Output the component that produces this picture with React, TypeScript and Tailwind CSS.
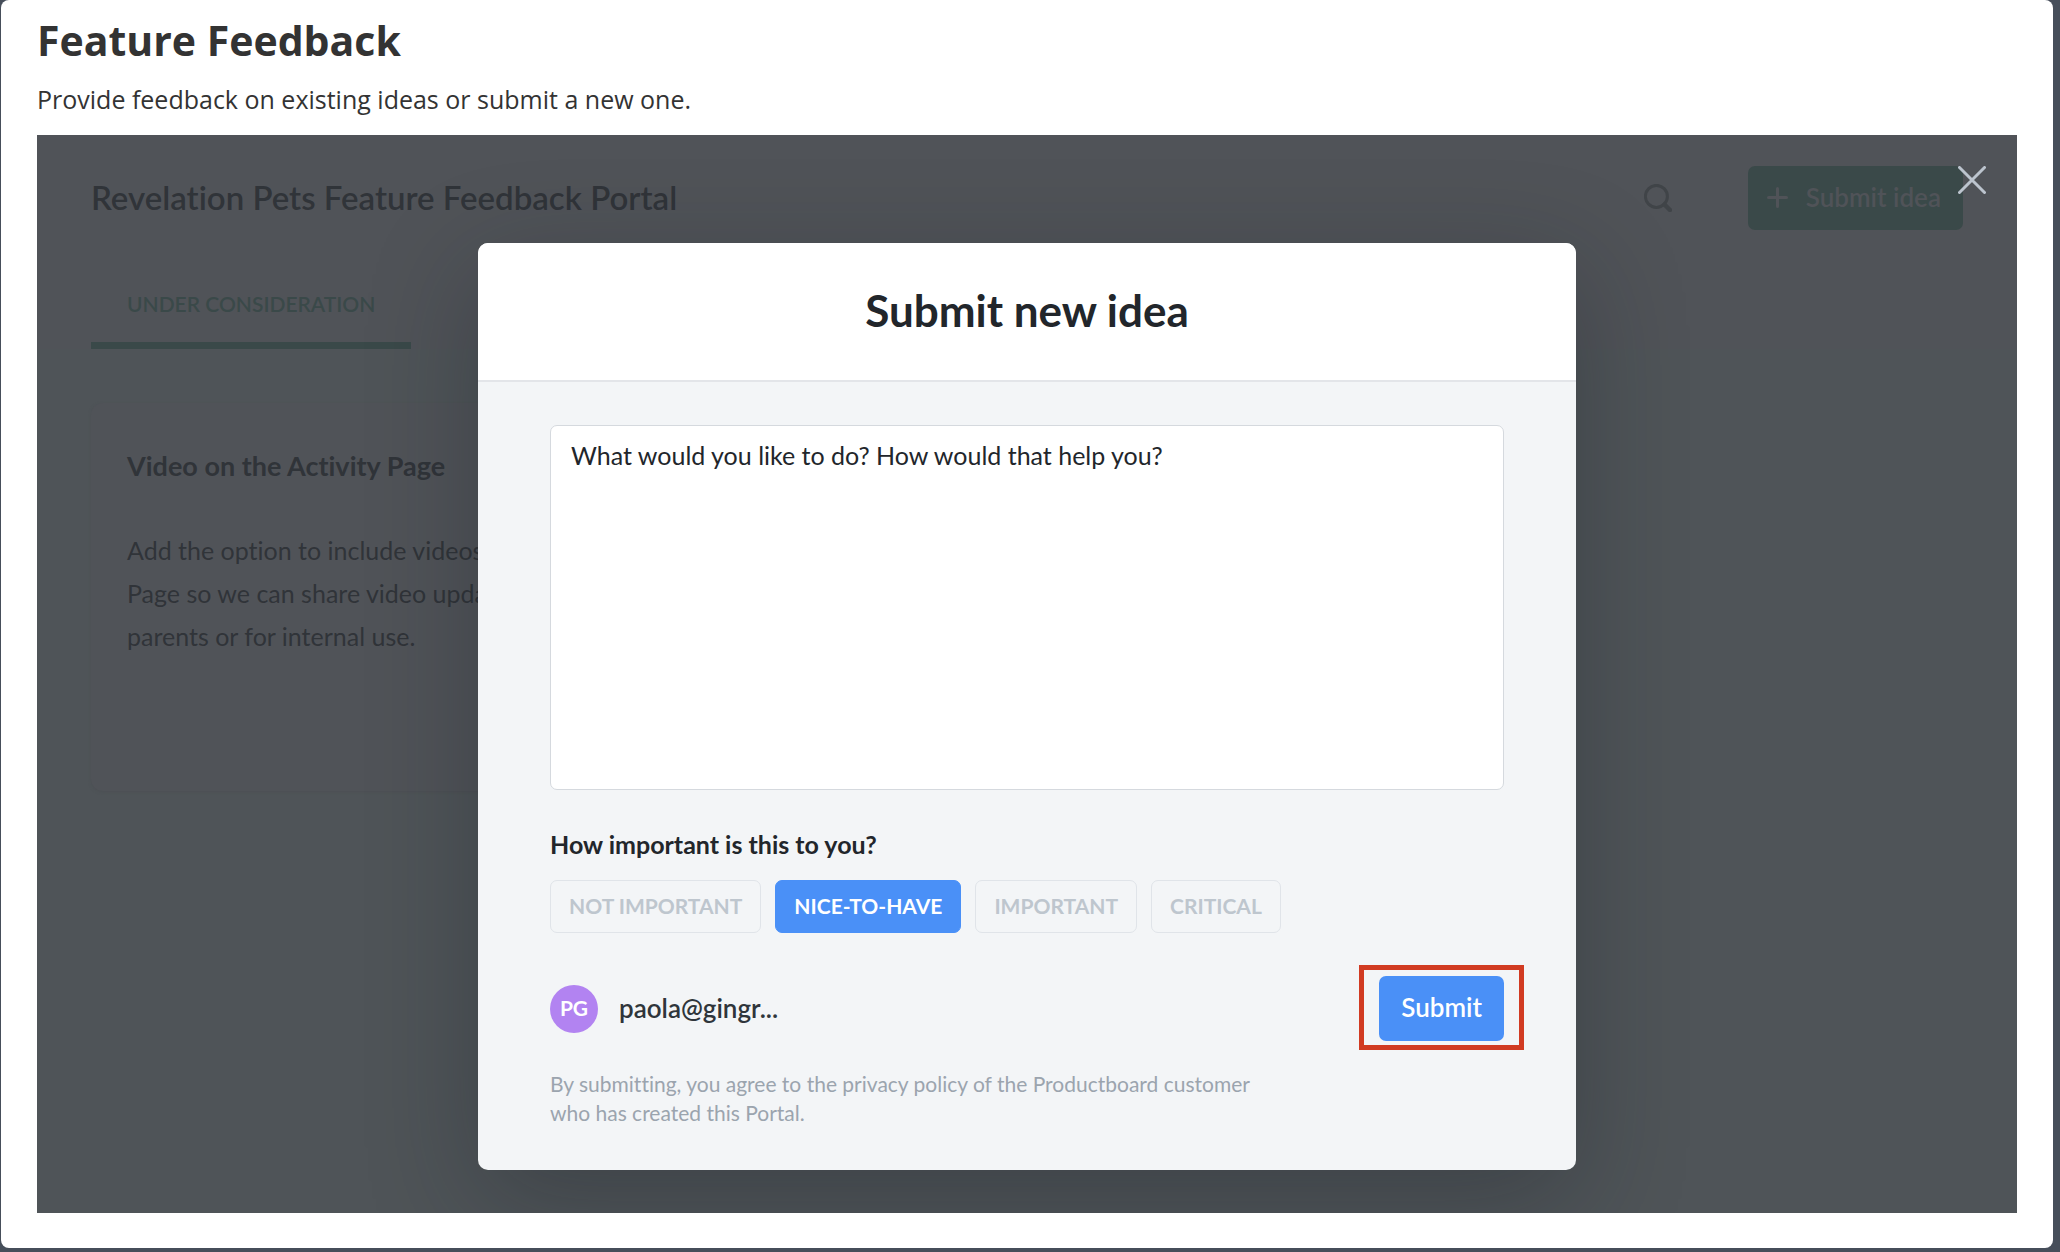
import { useState } from "react";

const LEVELS = ["NOT IMPORTANT", "NICE-TO-HAVE", "IMPORTANT", "CRITICAL"];

function PortalPage() {
  return (
    <div className="[grid-area:1/1] bg-[#4f5458] text-[#303439]">
      <header className="bg-[#505358]">
        <div className="flex items-center pt-[31px] pr-[54px] pl-[54px]">
          <h2 className="pb-0.5 text-[33px] leading-[62px] font-semibold">Revelation Pets Feature Feedback Portal</h2>
          <button type="button" aria-label="Search" className="ml-auto">
            <svg className="size-7" viewBox="0 0 28 28" fill="none" stroke="#404448">
              <circle cx="12.4" cy="12.4" r="11" strokeWidth="3" />
              <path d="M20.5 20.5 26 26" strokeWidth="4.5" strokeLinecap="round" />
            </svg>
          </button>
          <button
            type="button"
            className="ml-[76px] flex h-16 items-center gap-[18px] rounded-[7px] bg-[#3a4949] pr-[22px] pb-0.5 pl-[19px] text-[26px] font-semibold text-[#505358]"
          >
            <svg className="size-[21px]" viewBox="0 0 21 21" fill="none" stroke="currentColor" strokeWidth="3" strokeLinecap="round">
              <path d="M10.5 1.5v18M1.5 10.5h18" />
            </svg>
            Submit idea
          </button>
        </div>
        <nav className="px-[54px] pt-[43px]">
          <a href="#under-consideration" className="inline-block border-b-[7px] border-[#3a4949] px-9 pt-4 pb-[23px] align-top text-[21px] leading-[30px] font-semibold text-[#3a4949]">
            UNDER CONSIDERATION
          </a>
        </nav>
      </header>
      <article className="mt-[54px] ml-[54px] h-[388px] w-[480px] rounded-xl bg-[#505358] px-9 pt-[46px] shadow-[0_1px_3px_#4c5054]">
        <h3 className="text-[27px] leading-[34px] font-bold">Video on the Activity Page</h3>
        <p className="mt-[46px] text-[25px] leading-[43px] whitespace-nowrap">
          Add the option to include videos
          <br />
          Page so we can share video updates
          <br />
          parents or for internal use.
        </p>
      </article>
    </div>
  );
}

function SubmitIdeaDialog() {
  const [level, setLevel] = useState("NICE-TO-HAVE");
  return (
    <form
      role="dialog"
      aria-labelledby="dialog-title"
      onSubmit={(e) => e.preventDefault()}
      className="z-10 mt-[108px] mb-[43px] w-full max-w-[1098px] self-start justify-self-center overflow-hidden rounded-[10px] bg-[#f3f5f7] text-[#22262b] shadow-[0_30px_110px_rgba(20,28,32,0.3)] [grid-area:1/1]"
    >
      <h2 id="dialog-title" className="border-b-2 border-[#e3e5e9] bg-white pt-[43px] pb-[45px] text-center text-[44px] leading-[49px] font-bold">
        Submit new idea
      </h2>
      <div className="px-[72px] pt-[43px] pb-[43px]">
        <textarea
          aria-label="Idea"
          defaultValue="What would you like to do? How would that help you?"
          className="block h-[365px] w-full resize-none rounded-[7px] border border-[#d5d9de] bg-white px-5 py-[13px] text-[25px] leading-8 outline-none"
        />
        <fieldset className="mt-9">
          <legend className="text-[25px] leading-9 font-bold">How important is this to you?</legend>
          <div className="mt-[18px] flex gap-[14px]">
            {LEVELS.map((l) => (
              <button
                key={l}
                type="button"
                aria-pressed={l === level}
                onClick={() => setLevel(l)}
                className={
                  "h-[53px] rounded-[7px] border px-[18px] pb-0.5 text-[21px] font-bold " +
                  (l === level ? "border-[#4a90f7] bg-[#4a90f7] text-white" : "border-[#e0e4e9] text-[#bec6ce]")
                }
              >
                {l}
              </button>
            ))}
          </div>
        </fieldset>
        <div className="mt-[43px] flex items-center">
          <span className="flex size-12 items-center justify-center rounded-full bg-[#b283f1] pb-0.5 text-[21px] font-bold text-white">PG</span>
          <span className="ml-[21px] text-[26px] font-semibold text-[#2f353b]">paola@gingr...</span>
          <div className="relative ml-auto">
            <button type="submit" className="h-[65px] rounded-[7px] bg-[#4a90f7] px-[22px] pb-0.5 text-[26px] font-semibold text-white">
              Submit
            </button>
            <span aria-hidden="true" className="pointer-events-none absolute -inset-x-5 -top-[11px] -bottom-[9px] border-5 border-[#d13b22]" />
          </div>
        </div>
        <p className="mt-7 max-w-[740px] text-[21px] leading-[29px] text-[#9ba4ae]">
          By submitting, you agree to the privacy policy of the Productboard customer who has created this Portal.
        </p>
      </div>
    </form>
  );
}

export default function App() {
  return (
    <div className="min-h-screen bg-[#464e5a] pr-[7px] pb-1 pl-px">
      <main className="rounded-lg bg-white px-9 pb-[35px]">
        <div className="font-['Open_Sans',sans-serif] text-[#333333]">
          <h1 className="pt-[11px] text-[41px] leading-[58px] font-bold">Feature Feedback</h1>
          <p className="pt-3 pb-[18px] text-[25px] leading-9">Provide feedback on existing ideas or submit a new one.</p>
        </div>
        <section className="relative grid overflow-hidden font-['Lato',sans-serif] [font-variant-ligatures:none]">
          <PortalPage />
          <SubmitIdeaDialog />
          <button type="button" aria-label="Close" className="absolute top-[31px] right-[31px] z-20">
            <svg className="size-7" viewBox="0 0 28 28" fill="none" stroke="#bcc4ce" strokeWidth="3" strokeLinecap="round">
              <path d="M1.5 1.5l25 25M26.5 1.5l-25 25" />
            </svg>
          </button>
        </section>
      </main>
    </div>
  );
}
